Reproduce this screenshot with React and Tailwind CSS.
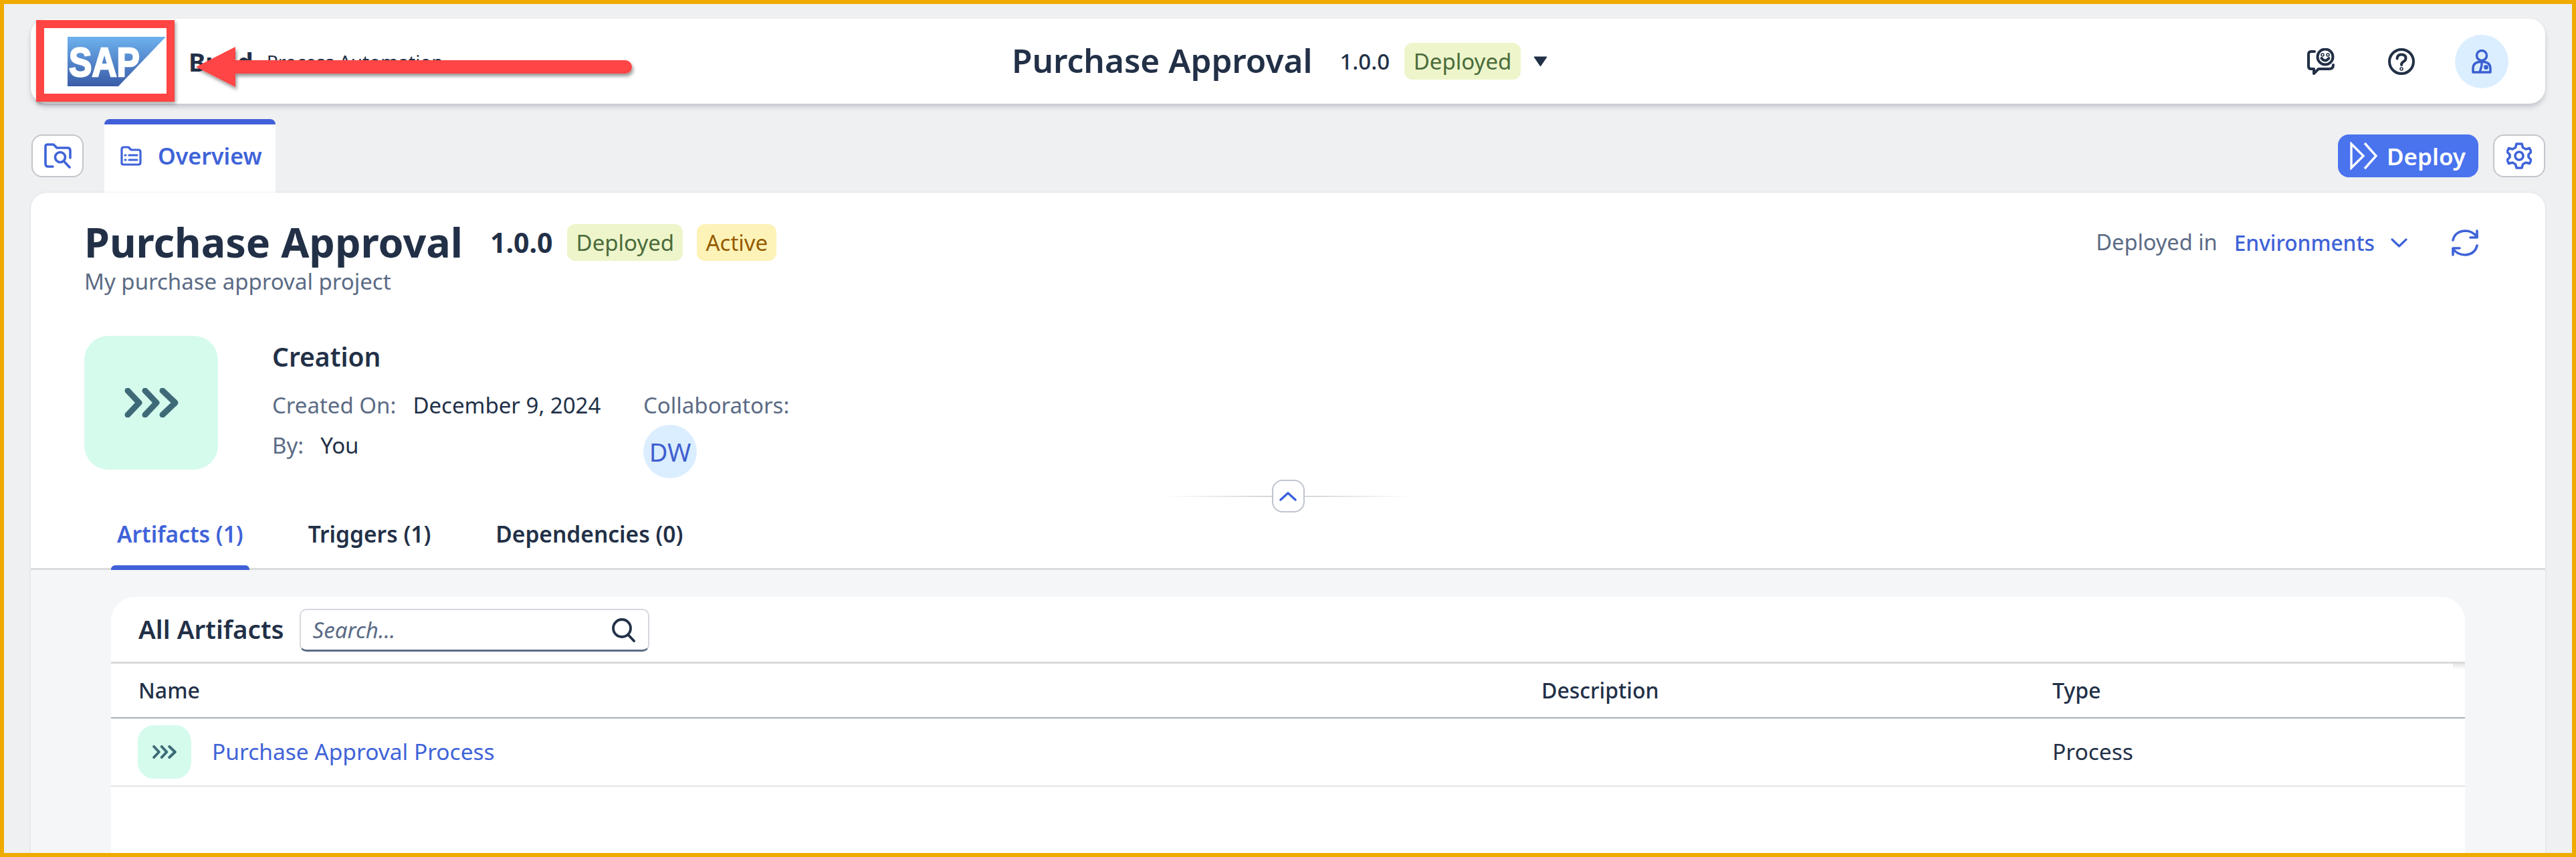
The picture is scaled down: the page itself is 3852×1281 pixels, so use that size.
import React from "react";

const font = { fontFamily: '"Noto Sans", sans-serif' };

function Chevrons({ className }) {
  return (
    <svg viewBox="0 0 81 44" className={className} fill="none" stroke="currentColor" strokeWidth="9" strokeLinecap="round" strokeLinejoin="round">
      <path d="M5 4 L22 22 L5 40" />
      <path d="M31 4 L48 22 L31 40" />
      <path d="M57 4 L76 22 L57 40" />
    </svg>
  );
}

function SapLogo() {
  return (
    <svg viewBox="0 0 147 74" className="w-[147px] h-[74px] shrink-0">
      <defs>
        <linearGradient id="sapg" x1="0" y1="0" x2="0" y2="1">
          <stop offset="0" stopColor="#6db1ee" />
          <stop offset="1" stopColor="#3a5ca8" />
        </linearGradient>
      </defs>
      <polygon points="0,0 147,0 76,74 0,74" fill="url(#sapg)" />
      <text x="2" y="59" fill="#fff" stroke="#fff" strokeWidth="2.5" fontFamily="Liberation Sans, sans-serif" fontWeight="700" fontSize="62" textLength="106" lengthAdjust="spacingAndGlyphs">SAP</text>
    </svg>
  );
}

function Arrow() {
  return (
    <svg viewBox="0 0 670 80" className="absolute left-[287px] top-[64px] w-[670px] h-[80px]">
      <defs>
        <filter id="as" x="-5%" y="-20%" width="110%" height="150%">
          <feDropShadow dx="2" dy="4" stdDeviation="2.5" floodColor="#000" floodOpacity="0.4" />
        </filter>
      </defs>
      <path d="M0 30 L59 0 L59 20 L642 20 A10 10 0 0 1 642 40 L59 40 L59 60 Z" fill="#ff4444" filter="url(#as)" />
    </svg>
  );
}

export default function App() {
  return (
    <div style={font} className="relative w-[3852px] h-[1281px] border-[6px] border-[#f0ab00] bg-[#eff0f2] overflow-hidden flex flex-col px-[40px] pt-[22px] text-[#223047]">
      {/* Shell header */}
      <header className="h-[127px] shrink-0 rounded-[24px] bg-white shadow-[0_5px_7px_rgba(50,60,80,0.22)] flex items-center">
        <div className="w-[1467px] shrink-0 flex items-center pl-[55px]">
          <SapLogo />
          <span className="ml-[34px] text-[38px] font-bold leading-none">Build</span>
          <span className="ml-[20px] text-[28px] leading-none text-[#223047]">Process Automation</span>
        </div>
        <div className="flex items-center">
          <span className="text-[49.5px] font-semibold leading-none -mt-[2px]">Purchase Approval</span>
          <span className="ml-[41px] text-[33px] font-medium leading-none">1.0.0</span>
          <span className="ml-[22px] h-[55px] w-[174px] rounded-[12px] bg-[#eef5cb] text-[#4a6b3b] text-[33px] flex items-center justify-center">Deployed</span>
          <svg viewBox="0 0 21 16" className="ml-[19px] w-[21px] h-[16px]"><path d="M1 1 H20 L10.5 15 Z" fill="#223047" stroke="#223047" strokeLinejoin="round" /></svg>
        </div>
        <div className="ml-auto flex items-center pr-[55px]">
          <svg viewBox="0 0 41 40" className="w-[41px] h-[40px]" fill="none" stroke="#223047" strokeWidth="4" strokeLinecap="round" strokeLinejoin="round">
            <path d="M11 5 H6 Q2 5 2 9 V27 Q2 31 6 31 H10 V38 L17 31 H33 Q39 31 39 25" />
            <circle cx="27" cy="13" r="11.5" />
            <circle cx="23" cy="10" r="0.8" />
            <circle cx="31" cy="10" r="0.8" />
            <path d="M21.5 15 Q27 22 32.5 15" />
          </svg>
          <svg viewBox="0 0 40 40" className="ml-[80px] w-[40px] h-[40px]" fill="none" stroke="#223047" strokeWidth="4" strokeLinecap="round" strokeLinejoin="round">
            <circle cx="20" cy="20" r="18" />
            <path d="M13.5 15.5 Q14 9.5 20 9.5 Q26.5 9.5 26.5 15 Q26.5 18.5 22.5 20.5 Q20 22 20 25" />
            <circle cx="20" cy="31" r="0.8" />
          </svg>
          <div className="ml-[60px] w-[80px] h-[80px] rounded-full bg-[#dbeeff] flex items-center justify-center">
            <svg viewBox="0 0 30 36" className="w-[30px] h-[36px]" fill="none" stroke="#3b5fd0" strokeWidth="3.5" strokeLinejoin="round">
              <ellipse cx="15" cy="9" rx="7.5" ry="7.5" />
              <path d="M2 34 V28 Q2 21 9 19 L15 18 L21 19 Q28 21 28 28 V34 Z" />
              <path d="M15 18 V24 M12 34 L15 24" />
              <rect x="20" y="25" width="3" height="3" fill="#3b5fd0" />
            </svg>
          </div>
        </div>
      </header>

      {/* Tab strip */}
      <div className="h-[110px] mt-[23px] shrink-0 flex items-start">
        <button className="ml-[1px] mt-[23px] w-[78px] h-[64px] rounded-[16px] border-2 border-[#c3c6cc] bg-white flex items-center justify-center">
          <svg viewBox="0 0 41 38" className="w-[41px] h-[38px]" fill="none" stroke="#3f63d8" strokeWidth="3.6" strokeLinecap="round" strokeLinejoin="round">
            <path d="M13 35 H6 Q2 35 2 31 V5 Q2 2 5 2 H14 L19 7 H35 Q39 7 39 11 V22" />
            <circle cx="24" cy="21" r="7.5" />
            <path d="M29.5 27 L38 36" />
          </svg>
        </button>
        <div className="ml-[31px] w-[256px] h-[110px] rounded-t-[8px] bg-white border-t-[8px] border-[#4060d8] flex items-center pb-[8px]">
          <svg viewBox="0 0 32 30" className="ml-[24px] w-[32px] h-[30px]" fill="none" stroke="#3f63d8" strokeWidth="3.2" strokeLinecap="round" strokeLinejoin="round">
            <path d="M2 26 V5 Q2 2 5 2 H12 L16 6 H27 Q30 6 30 9 V25 Q30 28 27 28 H5 Q2 28 2 26 Z" />
            <path d="M7 14 H8 M7 21 H8 M13 14 H25 M13 21 H25" />
          </svg>
          <span className="ml-[24px] text-[34px] font-semibold leading-none text-[#3f63d8]">Overview</span>
        </div>
        <button className="ml-auto mt-[23px] w-[210px] h-[64px] rounded-[16px] bg-[#4a73ee] flex items-center text-white">
          <svg viewBox="0 0 42 42" className="ml-[18px] w-[42px] h-[42px]" fill="none" stroke="#fff" strokeWidth="3.4" strokeLinejoin="miter">
            <path d="M2 3 V39 L20 21 Z" />
            <path d="M22 2 L39 21 L22 40" />
          </svg>
          <span className="ml-[13px] text-[35px] font-semibold leading-none">Deploy</span>
        </button>
        <button className="ml-[22px] mt-[23px] w-[78px] h-[64px] rounded-[16px] border-2 border-[#c3c6cc] bg-white flex items-center justify-center">
          <svg viewBox="0 0 38 40" className="w-[38px] h-[40px]" fill="none" stroke="#3f63d8" strokeWidth="3.6" strokeLinejoin="round">
            <path d="M15 2 H23 L24.5 7.5 L29 10 L34.5 8.5 L37 14 L33 18 V22 L37 26 L34.5 31.5 L29 30 L24.5 32.5 L23 38 H15 L13.5 32.5 L9 30 L3.5 31.5 L1 26 L5 22 V18 L1 14 L3.5 8.5 L9 10 L13.5 7.5 Z" />
            <circle cx="19" cy="20" r="6" />
          </svg>
        </button>
      </div>

      {/* Main panel */}
      <main className="flex-1 rounded-t-[24px] bg-white shadow-[0_0_3px_rgba(50,60,80,0.15)] flex flex-col overflow-hidden">
        <div className="shrink-0 px-[80px] pt-[47px]">
          <div className="flex justify-between pr-[20px]">
            <div>
              <div className="flex items-center h-[55px]">
                <h1 className="text-[61px] font-bold leading-none -mt-[3px]">Purchase Approval</h1>
                <span className="ml-[41px] text-[41px] font-bold leading-none">1.0.0</span>
                <span className="ml-[22px] h-[55px] w-[173px] rounded-[12px] bg-[#eef5cb] text-[#4a6b3b] text-[33px] flex items-center justify-center">Deployed</span>
                <span className="ml-[21px] h-[55px] w-[119px] rounded-[12px] bg-[#fdf3b8] text-[#955c00] text-[33px] flex items-center justify-center">Active</span>
              </div>
              <p className="mt-[11px] text-[33px] leading-[40px] text-[#5b6b85]">My purchase approval project</p>
            </div>
            <div className="flex items-center h-[55px]">
              <span className="text-[32.5px] leading-none text-[#5b6b85]">Deployed in</span>
              <span className="ml-[25px] text-[31.7px] font-medium leading-none text-[#3f63d8]">Environments</span>
              <svg viewBox="0 0 25 14" className="ml-[24px] w-[25px] h-[14px]" fill="none" stroke="#3f63d8" strokeWidth="3.2" strokeLinecap="round" strokeLinejoin="round"><path d="M2 2 L12.5 12 L23 2" /></svg>
              <svg viewBox="0 0 40 40" className="ml-[66px] w-[40px] h-[40px]" fill="none" stroke="#3f63d8" strokeWidth="3.6" strokeLinecap="round" strokeLinejoin="round">
                <path d="M2 16 Q5 3 20 2 Q31 2 38 11" />
                <path d="M38 2 V12 H28" />
                <path d="M38 24 Q35 37 20 38 Q9 38 2 29" />
                <path d="M2 38 V28 H12" />
              </svg>
            </div>
          </div>

          <div className="mt-[61px] flex h-[213px]">
            <div className="w-[200px] h-[200px] rounded-[36px] bg-[#d5fbed] flex items-center justify-center text-[#3e6a78]">
              <Chevrons className="w-[81px] h-[44px]" />
            </div>
            <div className="ml-[81px]">
              <div className="h-[60px] flex items-center text-[39px] font-semibold leading-none">Creation</div>
              <div className="mt-[13px] flex">
                <div className="w-[555px] text-[33px] leading-none">
                  <div className="h-[60px] flex items-center">
                    <span className="text-[#5b6b85]">Created On:</span>
                    <span className="ml-[25px]">December 9, 2024</span>
                  </div>
                  <div className="h-[60px] flex items-center">
                    <span className="text-[#5b6b85]">By:</span>
                    <span className="ml-[25px]">You</span>
                  </div>
                </div>
                <div>
                  <div className="h-[60px] flex items-center text-[33px] leading-none text-[#5b6b85]">Collaborators:</div>
                  <div className="w-[80px] h-[80px] rounded-full bg-[#dbeeff] text-[#3f5fd0] text-[38px] flex items-center justify-center">DW</div>
                </div>
              </div>
            </div>
          </div>
        </div>

        <div className="shrink-0 mt-[2px] relative h-[49px] flex items-center justify-center">
          <div className="w-[370px] h-[2px] bg-[linear-gradient(90deg,transparent,#d5d8dc_40%,#d5d8dc_60%,transparent)]" />
          <button className="absolute w-[49px] h-[49px] rounded-[16px] border-2 border-[#bfc4cd] bg-white flex items-center justify-center">
            <svg viewBox="0 0 26 15" className="w-[26px] h-[15px]" fill="none" stroke="#3b62dc" strokeWidth="3.4" strokeLinecap="round" strokeLinejoin="round"><path d="M2 13 L13 3 L24 13" /></svg>
          </button>
        </div>

        <nav className="shrink-0 h-[86px] border-b-[3px] border-[#dcdcdc] pl-[120px] flex gap-[79px] text-[33.5px] font-semibold leading-none">
          <div className="relative px-[9px] pb-[18px] flex items-center text-[#3f63d8]">
            Artifacts (1)
            <span className="absolute left-0 right-0 -bottom-[3px] h-[7px] rounded-t-[6px] bg-[#4060d8]" />
          </div>
          <div className="px-[9px] pb-[18px] flex items-center">Triggers (1)</div>
          <div className="px-[9px] pb-[18px] flex items-center">Dependencies (0)</div>
        </nav>

        <section className="flex-1 bg-[#f5f6f8] px-[120px] pt-[40px] flex flex-col">
          <div className="relative flex-1 rounded-t-[36px] bg-white">
            <div className="h-[100px] border-b-[3px] border-[#d9d9d9] pl-[41px] flex items-center">
              <span className="text-[38.5px] font-semibold leading-none">All Artifacts</span>
              <div className="ml-[23px] mt-[3px] w-[523px] h-[64px] rounded-[10px] border-2 border-b-[3px] border-[#d5d8de] border-b-[#5b6b85] flex items-center justify-between pl-[18px] pr-[18px]">
                <span className="italic text-[33px] leading-none text-[#5b6b85]">Search...</span>
                <svg viewBox="0 0 37 37" className="w-[37px] h-[37px]" fill="none" stroke="#223047" strokeWidth="3.8" strokeLinecap="round"><circle cx="16" cy="16" r="13" /><path d="M25.5 26 L34 35" /></svg>
              </div>
            </div>
            <div className="absolute right-0 top-[100px] w-[18px] h-[9px] bg-[linear-gradient(180deg,#e6e7e9,#ffffff)]" />
            <div className="h-[82px] border-b-2 border-[#a9aeba] pl-[41px] grid grid-cols-[2098px_764px_1fr] items-center text-[32px] font-medium leading-none">
              <span>Name</span>
              <span>Description</span>
              <span>Type</span>
            </div>
            <div className="h-[102px] border-b-2 border-[#e5e5e5] pl-[40px] grid grid-cols-[2099px_764px_1fr] items-center text-[33.5px] leading-none">
              <div className="flex items-center">
                <div className="w-[80px] h-[80px] rounded-[24px] bg-[#d5fbed] flex items-center justify-center text-[#3e6a78]">
                  <Chevrons className="w-[36px] h-[20px]" />
                </div>
                <span className="ml-[31px] text-[#3f63d8]">Purchase Approval Process</span>
              </div>
              <span />
              <span>Process</span>
            </div>
          </div>
        </section>
      </main>

      {/* Annotation overlay */}
      <div className="absolute left-[48px] top-[24px] w-[207px] h-[122px] border-[12px] border-[#ff4444] shadow-[2px_3px_5px_rgba(0,0,0,0.35)]" />
      <Arrow />
    </div>
  );
}
